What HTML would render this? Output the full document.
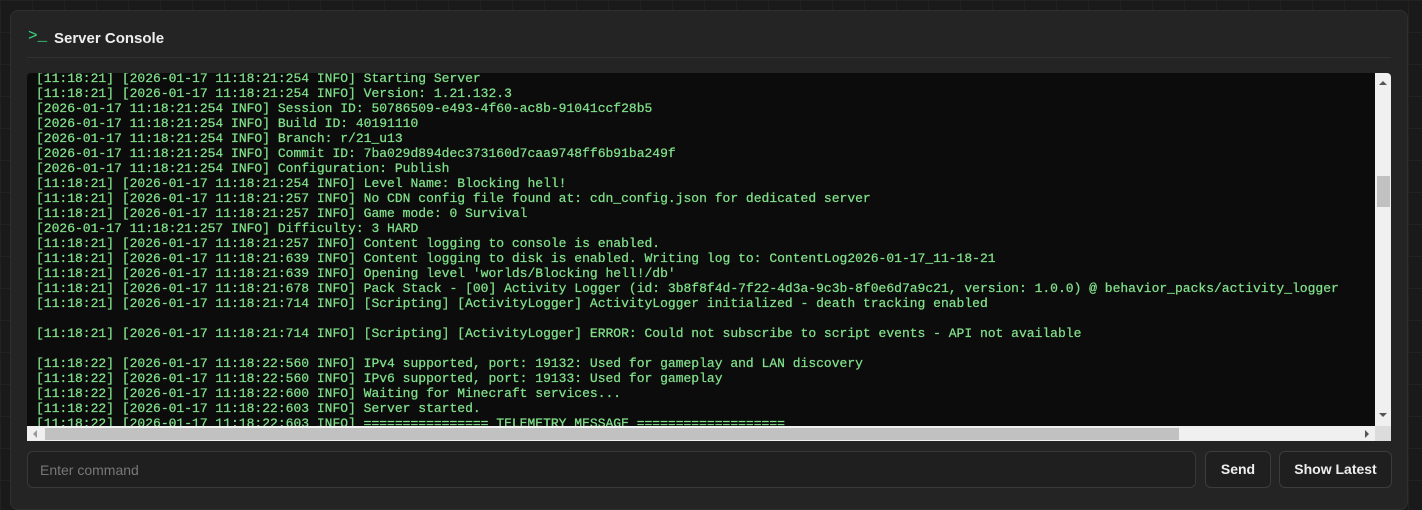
<!DOCTYPE html>
<html><head><style>
html,body{margin:0;padding:0;width:1422px;height:503px;overflow:hidden;background:#1a1a1a;
background-image:linear-gradient(#222 1px,transparent 1px),linear-gradient(90deg,#222 1px,transparent 1px);background-size:32px 32px;font-family:"Liberation Sans",sans-serif}
.card{position:absolute;left:10px;top:10px;width:1398px;height:500px;background:#242424;border:1px solid #2f2f2f;border-radius:8px;box-sizing:border-box}
.hdr{position:absolute;left:16px;right:16px;top:0;height:46px;border-bottom:1px solid #303030}
.hdr .ic{position:absolute;left:1px;top:16px;color:#3ddc84;font:16px "Liberation Mono",monospace}
.hdr .t{position:absolute;left:27px;top:19px;color:#eee;font-weight:bold;font-size:15px}
.con{position:absolute;left:16px;top:62px;width:1364px;height:368px;background:#0c0c0c;border-radius:4px 4px 0 0;overflow:hidden}
.txt{position:absolute;left:9px;top:-2px;white-space:pre;color:#80e08a;font:13px/15px "Liberation Mono",monospace;-webkit-text-stroke:0.25px #80e08a}
.vs{position:absolute;right:0;top:0;width:16px;height:353px;background:#f0f0f0}
.hs{position:absolute;left:0;bottom:0;height:15px;width:1348px;background:#f0f0f0}
.cor{position:absolute;right:0;bottom:0;width:16px;height:15px;background:#dcdcdc}
.inp{position:absolute;left:16px;top:440px;width:1169px;height:37px;border:1px solid #383838;border-radius:6px;background:#1f1f1f;box-sizing:border-box;color:#777;font-size:14px;padding:10px 12px}
.btn{position:absolute;top:440px;height:37px;border:1px solid #3c3c3c;border-radius:6px;background:#1f1f1f;box-sizing:border-box;color:#eee;font-weight:bold;font-size:14px;text-align:center;line-height:35px}
</style></head><body>
<div class="card">
<div class="hdr"><span class="ic">&gt;_</span><span class="t">Server Console</span></div>
<div class="con">
<div class="txt">[11:18:21] [2026-01-17 11:18:21:254 INFO] Starting Server
[11:18:21] [2026-01-17 11:18:21:254 INFO] Version: 1.21.132.3
[2026-01-17 11:18:21:254 INFO] Session ID: 50786509-e493-4f60-ac8b-91041ccf28b5
[2026-01-17 11:18:21:254 INFO] Build ID: 40191110
[2026-01-17 11:18:21:254 INFO] Branch: r/21_u13
[2026-01-17 11:18:21:254 INFO] Commit ID: 7ba029d894dec373160d7caa9748ff6b91ba249f
[2026-01-17 11:18:21:254 INFO] Configuration: Publish
[11:18:21] [2026-01-17 11:18:21:254 INFO] Level Name: Blocking hell!
[11:18:21] [2026-01-17 11:18:21:257 INFO] No CDN config file found at: cdn_config.json for dedicated server
[11:18:21] [2026-01-17 11:18:21:257 INFO] Game mode: 0 Survival
[2026-01-17 11:18:21:257 INFO] Difficulty: 3 HARD
[11:18:21] [2026-01-17 11:18:21:257 INFO] Content logging to console is enabled.
[11:18:21] [2026-01-17 11:18:21:639 INFO] Content logging to disk is enabled. Writing log to: ContentLog2026-01-17_11-18-21
[11:18:21] [2026-01-17 11:18:21:639 INFO] Opening level 'worlds/Blocking hell!/db'
[11:18:21] [2026-01-17 11:18:21:678 INFO] Pack Stack - [00] Activity Logger (id: 3b8f8f4d-7f22-4d3a-9c3b-8f0e6d7a9c21, version: 1.0.0) @ behavior_packs/activity_logger
[11:18:21] [2026-01-17 11:18:21:714 INFO] [Scripting] [ActivityLogger] ActivityLogger initialized - death tracking enabled

[11:18:21] [2026-01-17 11:18:21:714 INFO] [Scripting] [ActivityLogger] ERROR: Could not subscribe to script events - API not available

[11:18:22] [2026-01-17 11:18:22:560 INFO] IPv4 supported, port: 19132: Used for gameplay and LAN discovery
[11:18:22] [2026-01-17 11:18:22:560 INFO] IPv6 supported, port: 19133: Used for gameplay
[11:18:22] [2026-01-17 11:18:22:600 INFO] Waiting for Minecraft services...
[11:18:22] [2026-01-17 11:18:22:603 INFO] Server started.
[11:18:22] [2026-01-17 11:18:22:603 INFO] ================ TELEMETRY MESSAGE ===================</div>
<div class="vs"><div style="position:absolute;left:4px;top:8px;width:0;height:0;border-left:4px solid transparent;border-right:4px solid transparent;border-bottom:4px solid #555"></div>
<div style="position:absolute;left:2px;top:103px;width:13px;height:31px;background:#c1c1c1"></div>
<div style="position:absolute;left:4px;top:340px;border-left:4px solid transparent;border-right:4px solid transparent;border-top:4px solid #555"></div></div>
<div class="hs"><div style="position:absolute;left:6px;top:4px;border-top:4px solid transparent;border-bottom:4px solid transparent;border-right:4px solid #999"></div>
<div style="position:absolute;left:18px;top:2px;width:1134px;height:12px;background:#c1c1c1"></div>
<div style="position:absolute;left:1338px;top:4px;border-top:4px solid transparent;border-bottom:4px solid transparent;border-left:4px solid #555"></div></div>
<div class="cor"></div>
</div>
<div class="inp">Enter command</div>
<div class="btn" style="left:1194px;width:66px">Send</div>
<div class="btn" style="left:1268px;width:113px">Show Latest</div>
</div>
</body></html>
